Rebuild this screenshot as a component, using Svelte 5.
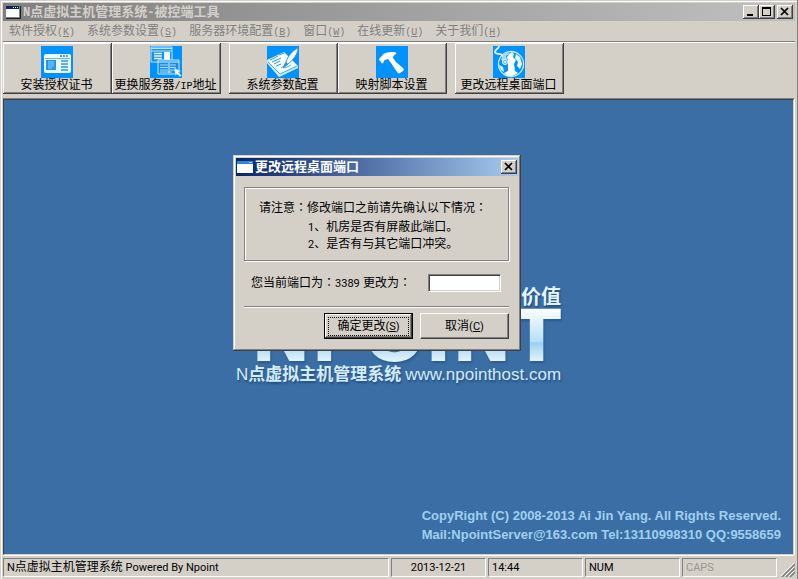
<script>
  const menus = [
    { label: '软件授权', key: 'K' },
    { label: '系统参数设置', key: 'S' },
    { label: '服务器环境配置', key: 'B' },
    { label: '窗口', key: 'W' },
    { label: '在线更新', key: 'U' },
    { label: '关于我们', key: 'H' }
  ];

  const toolGroups = [
    [
      { icon: 'cert', text: '安装授权证书' },
      { icon: 'server', text: '更换服务器', latin: '/IP', tail: '地址' }
    ],
    [
      { icon: 'params', text: '系统参数配置' },
      { icon: 'script', text: '映射脚本设置' }
    ],
    [{ icon: 'port', text: '更改远程桌面端口' }]
  ];

  let port = $state('');
</script>

<div class="window">
  <header class="titlebar">
    <svg class="app-icon" viewBox="0 0 16 16" aria-hidden="true" shape-rendering="crispEdges">
      <rect x="1" y="2" width="15" height="13" fill="#222" />
      <rect x="0" y="1" width="15" height="13" fill="#808080" />
      <rect x="1" y="2" width="13" height="3" fill="#0a246a" />
      <rect x="1" y="5" width="13" height="8" fill="#fff" />
      <path d="M8 3h1v1H8zM10 3h1v1h-1zM12 3h1v1h-1z" fill="#fff" />
    </svg>
    <h1><span class="wide">N</span>点虚拟主机管理系统<span class="wide">-</span>被控端工具</h1>
    <div class="controls">
      <button class="ctl" aria-label="最小化">
        <svg viewBox="0 0 16 14" shape-rendering="crispEdges"><path d="M4 9h6v2H4z" /></svg>
      </button>
      <button class="ctl" aria-label="最大化">
        <svg viewBox="0 0 16 14" shape-rendering="crispEdges"><path fill-rule="evenodd" d="M3 2h9v9H3zM4 4h7v6H4z" /></svg>
      </button>
      <button class="ctl close" aria-label="关闭">
        <svg viewBox="0 0 16 14"><path d="M4 3l7 7M11 3l-7 7" fill="none" stroke="#000" stroke-width="1.7" /></svg>
      </button>
    </div>
  </header>

  <nav class="menubar">
    {#each menus as menu}
      <button>{menu.label}<span class="mono">(<u>{menu.key}</u>)</span></button>
    {/each}
  </nav>

  <div class="toolbar" role="toolbar">
    {#each toolGroups as group}
      <div class="group">
        {#each group as tool}
          <button class="tool">
            <svg viewBox="0 0 32 32" aria-hidden="true">
              <rect width="32" height="32" fill="#0093ff" />
              {#if tool.icon === 'cert'}
                <rect x="3" y="8" width="27" height="19" rx="2" fill="#eef9ff" />
                <rect x="4" y="12" width="25" height="1" fill="#5fb9f5" />
                <path d="M19 9h2v2h-2zM22 9h2v2h-2zM25 9h2v2h-2z" fill="#3ba7f5" />
                <rect x="5" y="14" width="10" height="10" fill="#2595ea" />
                <path d="M7 16h6M7 18h6M7 20h6M7 22h4" stroke="#8dd2ff" />
                <path d="M20 15h7M20 18h7M20 21h7M20 24h7" stroke="#259bed" stroke-width="1.6" />
              {:else if tool.icon === 'server'}
                <path d="M1 1h21v15H1z" fill="#168fe8" stroke="#bfe7ff" />
                <path d="M1 2.5h21M1 5h21" stroke="#bfe7ff" />
                <path d="M4 7.5h8M4 10h8M4 12.5h8" stroke="#dff4ff" stroke-width="1.4" />
                <path d="M14 6h6v9h-6z" fill="#f2fbff" />
                <path d="M8 14h21v14H8z" fill="#168fe8" stroke="#c9ecff" />
                <path d="M8 16h21" stroke="#d9f2ff" />
                <path d="M10 19h8M10 21.5h8M10 24h8M20 19h6M20 21.5h6M20 24h6M10 26h12" stroke="#a5ddff" />
                <path d="M19 17v10" stroke="#dff4ff" />
                <path d="M24 22l7 3-2.5 1.2 3 3.3-1.5 1.5-3-3.3-1.5 2z" fill="#fff" stroke="#35a2ef" stroke-width=".5" />
              {:else if tool.icon === 'params'}
                <path d="M0 14L17 6l14 14-18 10z" fill="#f4fcff" />
                <path d="M0 14v3l12 14 19-9v-2L13 28z" fill="#d2efff" />
                <path d="M1 16l12 12 17-8" fill="none" stroke="#3da9ee" />
                <path d="M3 14l8-4M5 16l9-4M7 18l6-3M9 20l5-2M12 9l5-2" fill="none" stroke="#2e9ce8" />
                <path d="M14 22l3-2 1 2 6-3" fill="none" stroke="#2e9ce8" stroke-width=".8" />
                <path d="M31 2c-5 2-10 8-12 14l-3 6 5-4C26 14 31 8 31 2z" fill="#f7fdff" stroke="#2e9ce8" stroke-width="1" />
                <path d="M19 16l2 2-5 4z" fill="#2289d6" />
              {:else if tool.icon === 'script'}
                <path d="M3 14c0-2 2-3 3-4 1-3 5-4 12-4 2 0 3 1 2 2-2 1-3 2-3 4l3 4 7 6c1 1 1 2 0 3l-3 2c-1 1-2 0-3-1l-6-9-3-4-3 1c-1 0-1 2-2 3s-2 0-2-1-2-1-2-2z" fill="#fff" />
              {:else}
                <circle cx="18" cy="18" r="12.5" fill="none" stroke="#c9ecff" stroke-width="1.3" />
                <path d="M6 0c0 3-4 3-4 6 1 3 5 1 7 3s-1 5 3 7" fill="none" stroke="#e8f8ff" stroke-width="1.8" />
                <path d="M10 8l5-2 1 2-3 2 1 3-2 2-4-1z" fill="#a3dcff" />
                <path d="M16 8l3-2 2 2-1 3 3 3-2 4 1 7 3 2-5 3h-6l-3-3 4-2V15l-1-4z" fill="#fff" />
                <path d="M23 8l4 3 2 7-2 5-3-3 1-4-3-4zM6 19l4 2 1 5-3-2z" fill="#e8f8ff" />
                <circle cx="12" cy="16" r="2.5" fill="#43b5ff" stroke="#fff" />
                <circle cx="12" cy="16" r="1" fill="#fff" />
              {/if}
            </svg>
            <span class="tool-text">{tool.text}{#if tool.latin}<span class="mono">{tool.latin}</span>{tool.tail}{/if}</span>
          </button>
        {/each}
      </div>
    {/each}
  </div>

  <main class="workspace">
    <div class="brand">
      <span class="slogan">价值</span>
      <span class="logo">NPOINT</span>
      <div class="tagline">
        <span>N<b>点虚拟主机管理系统</b></span>
        <span>www.npointhost.com</span>
      </div>
    </div>

    <div class="copyright">
      <p>CopyRight (C) 2008-2013 Ai Jin Yang. All Rights Reserved.</p>
      <p>Mail:NpointServer@163.com Tel:13110998310 QQ:9558659</p>
    </div>

    <div class="dialog" role="dialog" aria-labelledby="dialog-title">
      <header class="titlebar active">
        <svg class="app-icon" viewBox="0 0 16 16" aria-hidden="true" shape-rendering="crispEdges">
          <rect x="0" y="2" width="16" height="12" fill="#fff" />
          <rect x="0" y="2" width="16" height="3" fill="#2f86dc" />
          <rect x="12" y="3" width="3" height="1" fill="#9fd0ff" />
        </svg>
        <h2 id="dialog-title">更改远程桌面端口</h2>
        <div class="controls">
          <button class="ctl" aria-label="关闭">
            <svg viewBox="0 0 16 14"><path d="M4 3l7 7M11 3l-7 7" fill="none" stroke="#000" stroke-width="1.7" /></svg>
          </button>
        </div>
      </header>

      <form class="dialog-body" onsubmit={(e) => e.preventDefault()}>
        <div class="notice">
          <p>请注意<span class="colon">：</span>修改端口之前请先确认以下情况<span class="colon">：</span></p>
          <ol>
            <li><span class="latin">1</span>、机房是否有屏蔽此端口。</li>
            <li><span class="latin">2</span>、是否有与其它端口冲突。</li>
          </ol>
        </div>

        <div class="port-row">
          <label for="port">您当前端口为<span class="colon">：</span><span class="latin">3389</span> 更改为<span class="colon">：</span></label>
          <input id="port" type="text" bind:value={port} />
        </div>

        <hr />

        <div class="actions">
          <button type="submit" class="push default"><span class="face">确定更改<span class="latin">(<u>S</u>)</span></span></button>
          <button type="button" class="push"><span class="face">取消<span class="latin">(<u>C</u>)</span></span></button>
        </div>
      </form>
    </div>
  </main>

  <footer class="statusbar">
    <div class="panel main"><span class="latin">N</span>点虚拟主机管理系统<span class="latin">&nbsp;Powered By Npoint</span></div>
    <div class="panel date latin">2013-12-21</div>
    <div class="panel latin">14:44</div>
    <div class="panel latin">NUM</div>
    <div class="panel latin off">CAPS</div>
    <svg class="grip" viewBox="0 0 14 14" aria-hidden="true">
      <path d="M1 14L14 1M5 14l9-9M9 14l5-5" stroke="#808080" stroke-width="1.6" />
      <path d="M0 13L13 0M4 13l9-9M8 13l5-5" stroke="#fff" />
    </svg>
  </footer>
</div>

<style>
  :global(body) {
    margin: 0;
    background: #d4d0c8;
  }

  .window {
    box-sizing: border-box;
    display: flex;
    flex-direction: column;
    min-height: 100vh;
    padding: 3px 3px 2px;
    background: #d4d0c8;
    box-shadow: inset -1px 0 #808080, inset 1px 1px #d4d0c8, inset 2px 2px #fff;
    font-family: 'Liberation Sans', 'Noto Sans CJK SC', sans-serif;
    font-size: 12px;
    color: #000;
  }

  button,
  input {
    font: inherit;
    color: inherit;
    padding: 0;
    margin: 0;
    border: 0;
    border-radius: 0;
    outline: none;
  }
  svg {
    display: block;
  }
  p,
  ol {
    margin: 0;
    padding: 0;
    list-style: none;
  }

  .mono {
    font-family: 'Liberation Mono', monospace;
    font-size: 10px;
  }
  .wide {
    font-family: 'Liberation Mono', monospace;
    font-size: 12px;
  }
  .latin {
    font-family: Roboto, sans-serif;
    font-size: 11px;
  }
  .colon {
    font-family: 'Noto Sans CJK TC', sans-serif;
  }

  /* title bars */
  .titlebar {
    display: flex;
    align-items: center;
    height: 18px;
    padding: 0 2px;
    background: linear-gradient(to right, #808080, #c0c0c0);
    color: #d4d0c8;
  }
  .titlebar.active {
    padding: 0 1px;
    background: linear-gradient(to right, #0a246a, #a6caf0);
    color: #fff;
  }
  .app-icon {
    width: 16px;
    height: 16px;
    margin-right: 2px;
  }
  h1,
  h2 {
    flex: 1;
    margin: 0;
    font-size: 13px;
    line-height: 18px;
    font-weight: 700;
    white-space: nowrap;
  }
  .controls {
    display: flex;
  }
  .ctl {
    width: 16px;
    height: 14px;
    background: #d4d0c8;
    box-shadow: inset -1px -1px #404040, inset 1px 1px #fff, inset -2px -2px #808080;
  }
  .ctl.close {
    margin-left: 2px;
  }
  .ctl svg {
    width: 16px;
    height: 14px;
  }

  /* menu */
  .menubar {
    display: flex;
    gap: 12px;
    height: 20px;
    padding: 0 6px;
    border-bottom: 1px solid #808080;
    box-shadow: 0 1px #fff;
  }
  .menubar button {
    background: none;
    color: #808080;
    line-height: 20px;
    white-space: nowrap;
  }

  /* toolbar */
  .toolbar {
    display: flex;
    gap: 8px;
    padding: 1px 0 5px;
  }
  .group {
    display: flex;
  }
  .tool {
    display: flex;
    flex-direction: column;
    align-items: center;
    width: 109px;
    height: 51px;
    padding: 3px 2px 0 0;
    background: #d4d0c8;
    box-shadow: inset -1px -1px #404040, inset 1px 1px #fff, inset -2px -2px #808080;
  }
  .tool svg {
    width: 32px;
    height: 32px;
  }
  .tool-text {
    line-height: 14px;
    white-space: nowrap;
  }

  /* workspace */
  .workspace {
    position: relative;
    flex: 1;
    display: flex;
    flex-direction: column;
    align-items: center;
    margin-right: 1px;
    padding: 184px 12px 10px;
    border: 1px solid;
    border-color: #404040 #d4d0c8 #d4d0c8 #404040;
    box-shadow: 0 -1px #808080, 0 1px #fff, 1px 0 #fff;
    background: #3b6ea5;
  }
  .brand {
    display: flex;
    flex-direction: column;
    align-items: flex-end;
    color: #e4f5ff;
    text-shadow: 1px 2px 2px #234f80;
  }
  .slogan {
    font-family: 'Noto Sans CJK SC', sans-serif;
    font-size: 20px;
    font-weight: 700;
    line-height: 24px;
  }
  .logo {
    font-family: 'DejaVu Sans', sans-serif;
    font-size: 72px;
    font-weight: 700;
    line-height: 56px;
    background: linear-gradient(#fff, #b5e0f8 60%, #9ad0f0 62%, #eefaff);
    background-clip: text;
    color: transparent;
    text-shadow: none;
    filter: drop-shadow(1px 2px 1px #2b5a8e);
  }
  .tagline {
    display: flex;
    align-items: center;
    gap: 4px;
    font-size: 17px;
    line-height: 22px;
    white-space: nowrap;
    color: #d3ecfb;
  }
  .tagline b {
    font-weight: 700;
  }
  .copyright {
    align-self: flex-end;
    margin-top: auto;
    font-size: 13px;
    font-weight: 700;
    line-height: 19px;
    color: #a0d0f0;
  }

  /* dialog */
  .dialog {
    position: absolute;
    left: 229px;
    top: 55px;
    box-sizing: border-box;
    width: 288px;
    padding: 3px;
    background: #d4d0c8;
    box-shadow: inset -1px -1px #404040, inset 1px 1px #d4d0c8, inset -2px -2px #808080, inset 2px 2px #fff;
  }
  .dialog-body {
    padding: 11px 9px 9px 8px;
  }
  .notice {
    padding: 10px 14px 7px;
    border: 1px solid #808080;
    box-shadow: 1px 1px #fff, inset 1px 1px #fff;
    line-height: 18px;
    white-space: nowrap;
  }
  .notice ol {
    padding: 2px 0 0 49px;
    line-height: 17px;
  }
  .port-row {
    display: flex;
    align-items: center;
    justify-content: space-between;
    padding: 12px 8px 13px 7px;
    line-height: 18px;
    white-space: nowrap;
  }
  .port-row input {
    box-sizing: border-box;
    width: 73px;
    height: 18px;
    padding: 0 3px;
    background: #fff;
    border: 1px solid;
    border-color: #808080 #fff #fff #808080;
    box-shadow: inset 1px 1px #404040, inset -1px -1px #d4d0c8;
  }
  hr {
    margin: 0;
    border: 0;
    border-top: 1px solid #808080;
    border-bottom: 1px solid #fff;
  }
  .actions {
    display: flex;
    justify-content: flex-end;
    gap: 7px;
    padding-top: 5px;
  }
  .push {
    width: 89px;
    height: 26px;
    padding: 3px;
    border: 1px solid transparent;
    background: #d4d0c8;
    background-clip: border-box;
    box-shadow: inset -1px -1px #404040, inset 1px 1px #fff, inset -2px -2px #808080;
  }
  .push:not(.default) {
    border-color: #fff #404040 #404040 #fff;
    box-shadow: inset -1px -1px #808080;
  }
  .push.default {
    border-color: #000;
  }
  .face {
    display: block;
    border: 1px dotted transparent;
    line-height: 16px;
  }
  .default .face {
    border-color: #000;
  }

  /* status bar */
  .statusbar {
    display: flex;
    align-items: flex-end;
    gap: 2px;
    margin-top: 3px;
  }
  .panel {
    box-sizing: border-box;
    width: 95px;
    height: 19px;
    padding: 0 3px;
    border: 1px solid;
    border-color: #808080 #fff #fff #808080;
    line-height: 17px;
    white-space: nowrap;
  }
  .panel.main {
    flex: 1;
  }
  .panel.date {
    text-align: center;
  }
  .panel.off {
    color: #9a968e;
  }
  .grip {
    width: 14px;
    height: 14px;
    margin-left: 2px;
  }
</style>
